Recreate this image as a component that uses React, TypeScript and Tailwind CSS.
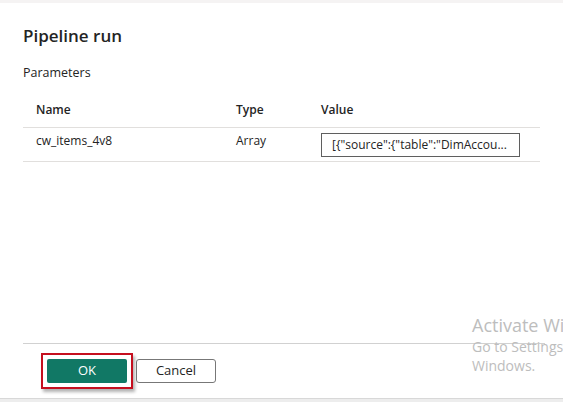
import React from 'react';

const font = { fontFamily: '"Open Sans", "Noto Sans", Arial, sans-serif' };

export default function App() {
  return (
    <div
      className="relative w-[563px] h-[402px] bg-white flex flex-col overflow-hidden text-[#242424]"
      style={font}
    >
      {/* bande du haut */}
      <div className="h-[3px] bg-[#f5f3f3]" />

      <div className="flex-1 flex flex-col px-[23px]">
        <h1 className="mt-[21px] text-[17px] leading-[24px] font-semibold">Pipeline run</h1>
        <div className="mt-[17px] text-[12.5px] leading-[16px]">Parameters</div>

        {/* Tableau des paramètres */}
        <div className="mt-[12px] w-[517px] text-[12px]">
          <div className="h-[35px] flex items-center border-b border-[#e1dfdd] font-semibold">
            <div className="w-[213px] pl-[13px]">Name</div>
            <div className="w-[85px]">Type</div>
            <div>Value</div>
          </div>
          <div className="h-[34px] flex items-start pt-[5px] border-b border-[#e1dfdd]">
            <div className="w-[213px] pl-[13px] leading-[16px]">cw_items_4v8</div>
            <div className="w-[85px] leading-[16px]">Array</div>
            <div className="w-[199px] h-[24px] border border-[#5f5f5f] flex items-center pl-[10px] text-[12px] whitespace-nowrap overflow-hidden">
              [{'{'}"source":{'{'}"table":"DimAccou...
            </div>
          </div>
        </div>

        <div className="flex-1" />

        {/* Pied */}
        <div className="w-[522px] border-t border-[#d1d1d1] h-[55px] flex items-start pt-[9px]">
          <div className="ml-[18px] p-[4px] border-2 border-[#c50f1f] shadow-[2px_3px_3px_rgba(0,0,0,0.3)]">
            <button className="w-[80px] h-[24px] bg-[#117865] text-white text-[13px] rounded-[2px] flex items-center justify-center">
              OK
            </button>
          </div>
          <button className="ml-[3px] mt-[6px] w-[80px] h-[24px] bg-white border border-[#777777] rounded-[3px] text-[13px] flex items-center justify-center">
            Cancel
          </button>
        </div>
      </div>

      {/* bande du bas */}
      <div className="h-[4px] bg-[#ededed] border-t border-[#d8d8d8]" />

      {/* filigrane Windows */}
      <div className="absolute left-[472px] top-[313px] text-[#bdbdbd] whitespace-nowrap pointer-events-none">
        <div className="text-[18px] leading-[24px]">Activate Windows</div>
        <div className="text-[14px] leading-[19px]">Go to Settings to activate</div>
        <div className="text-[14px] leading-[19px]">Windows.</div>
      </div>
    </div>
  );
}
